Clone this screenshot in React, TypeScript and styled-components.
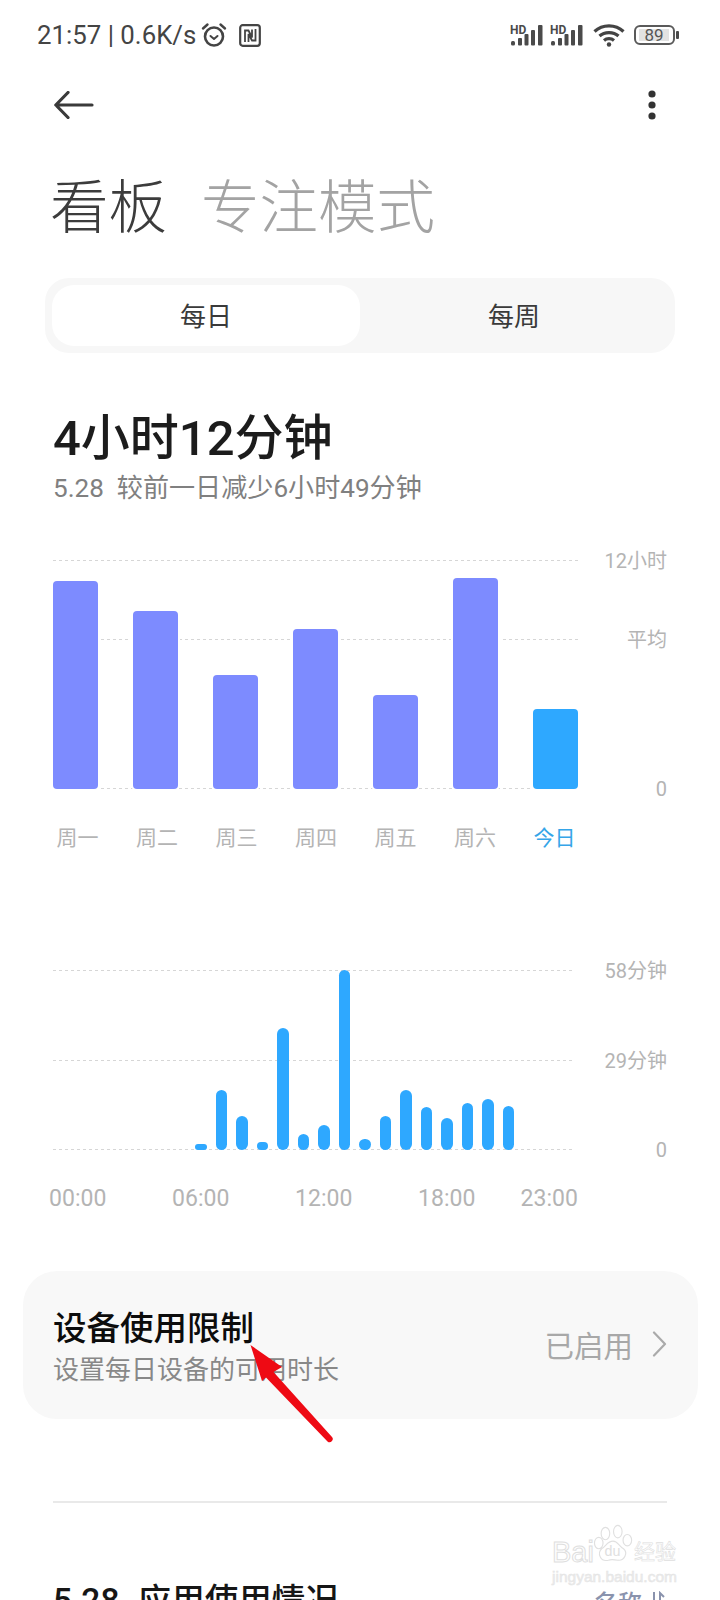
import React from "react";
import styled, { createGlobalStyle } from "styled-components";

const GlobalStyle = createGlobalStyle`
  html, body {
    margin: 0;
    padding: 0;
    background: #fff;
  }
  * {
    box-sizing: border-box;
  }
`;

const Page = styled.div`
  position: relative;
  width: 720px;
  height: 1600px;
  overflow: hidden;
  background: #fff;
  font-family: Roboto, "Noto Sans CJK SC", sans-serif;
`;

const StatusBar = styled.div`
  display: flex;
  align-items: center;
  justify-content: space-between;
  height: 70px;
  padding: 0 45px 0 37px;
`;

const StatusGroup = styled.div`
  display: flex;
  align-items: center;
`;

const StatusText = styled.span`
  font-size: 25.8px;
  line-height: 30px;
  color: #444;
  white-space: nowrap;
  margin-right: 5px;
`;

const Battery = styled.div`
  position: relative;
  display: flex;
  align-items: center;
  width: 41px;
  height: 20px;
  margin-left: 9px;
  padding-left: 3px;
  border: 2px solid #5a5a5a;
  border-radius: 6px;

  &::after {
    content: "";
    position: absolute;
    right: -6px;
    top: 4px;
    width: 3px;
    height: 8px;
    border-radius: 1px;
    background: #4a4a4a;
  }
`;

const BatteryFill = styled.div`
  width: 30px;
  height: 12px;
  display: flex;
  align-items: center;
  justify-content: center;
  background: #e2e2e2;
  color: #555;
  font-size: 17px;
  line-height: 12px;
`;

const NavBar = styled.div`
  display: flex;
  align-items: center;
  justify-content: space-between;
  height: 70px;
  padding: 0 64px 0 54px;
`;

const TitleRow = styled.div`
  display: flex;
  gap: 34px;
  margin-top: 36px;
  padding-left: 50px;
  height: 64px;
`;

const TitleTab = styled.h1<{ $active?: boolean }>`
  margin: 0;
  font-size: 58.5px;
  line-height: 64px;
  font-weight: 300;
  color: ${({ $active }) => ($active ? "#3c3c3c" : "#a3a3a3")};
`;

const Segment = styled.div`
  display: flex;
  width: 630px;
  height: 75px;
  margin: 38px 0 0 45px;
  padding: 7px;
  border-radius: 24px;
  background: #f7f7f7;
`;

const SegmentItem = styled.div<{ $active?: boolean }>`
  flex: 1;
  display: flex;
  align-items: center;
  justify-content: center;
  padding-bottom: 3px;
  border-radius: 22px;
  font-size: 26px;
  color: #3a3a3a;
  background: ${({ $active }) => ($active ? "#fff" : "transparent")};
`;

const Summary = styled.div`
  margin-top: 56px;
  padding-left: 53px;
`;

const Total = styled.div`
  font-size: 49px;
  line-height: 60px;
  font-weight: 500;
  color: #1c1c1c;
  white-space: nowrap;
`;

const Compare = styled.div`
  margin-top: 3px;
  font-size: 26.1px;
  line-height: 32px;
  color: #808080;
  white-space: nowrap;
`;

const Chart = styled.div<{ $top: number; $height: number }>`
  position: relative;
  width: 614px;
  height: ${({ $height }) => $height}px;
  margin: ${({ $top }) => $top}px 0 0 53px;
`;

const GridRow = styled.div<{ $lineWidth: number }>`
  position: absolute;
  left: 0;
  right: 0;
  height: 1px;
  display: flex;
  align-items: center;
  justify-content: space-between;

  &::before {
    content: "";
    width: ${({ $lineWidth }) => $lineWidth}px;
    height: 1px;
    background: repeating-linear-gradient(90deg, #d6d6d6 0 3px, transparent 3px 6px);
  }
`;

const TickLabel = styled.span`
  font-size: 20px;
  line-height: 24px;
  color: #b4b4b4;
  white-space: nowrap;
`;

const WeekBars = styled.div`
  position: absolute;
  inset: 0 auto 0 0;
  display: flex;
  align-items: flex-end;
  gap: 35px;
`;

const WeekBar = styled.div<{ $today?: boolean }>`
  width: 45px;
  border-radius: 4px;
  background: ${({ $today }) => ($today ? "#2ea8ff" : "#7d8bff")};
  box-shadow: 0 0 0 2px #fff;
`;

const DayRow = styled.div`
  display: flex;
  gap: 34.5px;
  margin: 35px 0 0 53px;
`;

const DayLabel = styled.span<{ $today?: boolean }>`
  width: 45px;
  display: flex;
  justify-content: center;
  font-size: 21px;
  line-height: 28px;
  white-space: nowrap;
  transform: translateX(2px);
  color: ${({ $today }) => ($today ? "#35a5e8" : "#b4b4b4")};
`;

const HourBars = styled.div`
  position: absolute;
  inset: 0 auto 0 14.5px;
  display: flex;
  align-items: flex-end;
`;

const HourSlot = styled.div`
  width: 20.5px;
  display: flex;
  justify-content: center;
`;

const HourBar = styled.div`
  width: 11.5px;
  border-radius: 6px;
  background: #2ea8ff;
`;

const HourRow = styled.div`
  display: flex;
  margin: 34px 0 0 67.5px;
`;

const HourLabel = styled.span`
  font-size: 23px;
  line-height: 30px;
  color: #b4b4b4;
  white-space: nowrap;
`;

const LimitCard = styled.div`
  display: flex;
  align-items: center;
  justify-content: space-between;
  width: 675px;
  height: 148px;
  margin: 57px 0 0 23px;
  padding: 0 31px 0 30px;
  border-radius: 34px;
  background: #f8f8f8;
`;

const LimitText = styled.div`
  margin-top: 7px;
`;

const LimitName = styled.div`
  font-size: 33.5px;
  line-height: 40px;
  font-weight: 500;
  color: #0c0c0c;
`;

const LimitHint = styled.div`
  margin-top: 3px;
  font-size: 26px;
  line-height: 36px;
  color: #888;
`;

const LimitState = styled.div`
  display: flex;
  align-items: center;
  gap: 19px;
  margin-top: -2px;
  font-size: 29.5px;
  color: #a8a8a8;
`;

const Divider = styled.div`
  width: 614px;
  height: 2px;
  margin: 82px 0 0 53px;
  background: #e9e9e9;
`;

const UsageRow = styled.div`
  display: flex;
  align-items: center;
  justify-content: space-between;
  margin-top: 78px;
  padding: 0 55px 0 53px;
  height: 40px;
`;

const UsageTitle = styled.div`
  font-size: 33.5px;
  line-height: 40px;
  font-weight: 500;
  word-spacing: 10px;
  color: #161616;
  white-space: nowrap;
`;

const SortButton = styled.div`
  display: flex;
  align-items: center;
  gap: 7px;
  font-size: 24px;
  font-weight: 500;
  color: #8a93ad;
`;

const Watermark = styled.div`
  position: absolute;
  left: 552px;
  top: 1522px;
  width: 132px;
  color: #fff;
`;

const MarkTop = styled.div`
  display: flex;
  align-items: flex-end;
  height: 42px;
`;

const MarkWord = styled.span<{ $size: number; $stroke: number }>`
  font-family: "Liberation Sans", "Noto Sans CJK SC", sans-serif;
  font-size: ${({ $size }) => $size}px;
  line-height: 24px;
  color: #fff;
  -webkit-text-stroke: ${({ $stroke }) => $stroke}px #dedede;
  white-space: nowrap;
`;

const MarkUrl = styled.div`
  margin-top: 5px;
  font-family: "Liberation Sans", sans-serif;
  font-size: 15.5px;
  line-height: 16px;
  color: #ececec;
  -webkit-text-stroke: 0.5px #e4e4e4;
  white-space: nowrap;
`;

const Pointer = styled.svg`
  position: absolute;
  left: 240px;
  top: 1335px;
`;

const SignalIcon: React.FC = () => (
  <svg width="34" height="22" viewBox="0 0 34 22" style={{ marginRight: 6 }}>
    <text x="0" y="9.5" fontSize="12" fontWeight="700" fontFamily="Roboto, sans-serif" fill="#4a4a4a">
      HD
    </text>
    <g fill="#4a4a4a">
      <rect x="1" y="17" width="4" height="4.5" rx="1.5" />
      <rect x="8" y="14" width="4" height="7.5" rx="1" />
      <rect x="14.5" y="10" width="4" height="11.5" rx="1" />
      <rect x="21" y="6" width="4" height="15.5" rx="1" />
      <rect x="28" y="1" width="4.5" height="20.5" rx="1" />
    </g>
  </svg>
);

const days = [
  { label: "周一", height: 208 },
  { label: "周二", height: 178 },
  { label: "周三", height: 114 },
  { label: "周四", height: 160 },
  { label: "周五", height: 94 },
  { label: "周六", height: 211 },
  { label: "今日", height: 80, today: true },
];

const hours = [0, 0, 0, 0, 0, 0, 6, 60, 34, 8, 122, 16, 25, 180, 11, 34, 60, 43, 32, 47, 51, 44, 0, 0];
const hourLabels: Record<number, string> = { 0: "00:00", 6: "06:00", 12: "12:00", 18: "18:00", 23: "23:00" };

const App: React.FC = () => {
  return (
    <Page>
      <GlobalStyle />
      <StatusBar>
        <StatusGroup>
          <StatusText>21:57 | 0.6K/s</StatusText>
          <svg width="26" height="26" viewBox="0 0 26 26" fill="none" stroke="#444" strokeLinecap="round" strokeLinejoin="round">
            <circle cx="13" cy="14.5" r="9" strokeWidth="2.6" />
            <path d="M9.5 14l3.5 3 3.5-3" strokeWidth="2" />
            <path d="M2 6.5 6.5 2.5M24 6.5l-4.5-4" strokeWidth="2.4" />
          </svg>
          <svg width="22" height="23" viewBox="0 0 22 23" fill="none" stroke="#444" style={{ marginLeft: 12 }}>
            <rect x="1.2" y="1.2" width="19.6" height="20.6" rx="2.5" strokeWidth="2.2" />
            <path d="M6 18V6.5h3.5l3.5 7V5.5M16.5 5v11.5H13L9.5 10v8" strokeWidth="1.8" />
          </svg>
        </StatusGroup>
        <StatusGroup>
          <SignalIcon />
          <SignalIcon />
          <svg width="32" height="24" viewBox="0 0 32 24" fill="none" stroke="#444" strokeWidth="3.2" style={{ marginLeft: 3 }}>
            <path d="M1.5 8.5C9.5 1 22.5 1 30.5 8.5" />
            <path d="M6.5 13c5-4.6 14-4.6 19 0" />
            <path d="M11 17.5c2.8-2.4 7.2-2.4 10 0" />
            <circle cx="16" cy="21.5" r="2.2" fill="#444" stroke="none" />
          </svg>
          <Battery>
            <BatteryFill>89</BatteryFill>
          </Battery>
        </StatusGroup>
      </StatusBar>

      <NavBar>
        <svg width="40" height="28" viewBox="0 0 40 28" fill="none" stroke="#3a3a3a" strokeWidth="3.2" strokeLinecap="round" strokeLinejoin="round">
          <path d="M38 14H2M14 1.5 1.8 14 14 26.5" />
        </svg>
        <svg width="8" height="30" viewBox="0 0 8 30" fill="#333">
          <circle cx="4" cy="4" r="3.6" />
          <circle cx="4" cy="15" r="3.6" />
          <circle cx="4" cy="26" r="3.6" />
        </svg>
      </NavBar>

      <TitleRow>
        <TitleTab $active>看板</TitleTab>
        <TitleTab>专注模式</TitleTab>
      </TitleRow>

      <Segment>
        <SegmentItem $active>每日</SegmentItem>
        <SegmentItem>每周</SegmentItem>
      </Segment>

      <Summary>
        <Total>4小时12分钟</Total>
        <Compare>5.28&nbsp; 较前一日减少6小时49分钟</Compare>
      </Summary>

      <Chart $top={56} $height={229}>
        <GridRow $lineWidth={527} style={{ top: 0 }}>
          <TickLabel>12小时</TickLabel>
        </GridRow>
        <GridRow $lineWidth={527} style={{ top: 79 }}>
          <TickLabel>平均</TickLabel>
        </GridRow>
        <GridRow $lineWidth={527} style={{ top: 228 }}>
          <TickLabel>0</TickLabel>
        </GridRow>
        <WeekBars>
          {days.map((day) => (
            <WeekBar key={day.label} $today={day.today} style={{ height: day.height }} />
          ))}
        </WeekBars>
      </Chart>
      <DayRow>
        {days.map((day) => (
          <DayLabel key={day.label} $today={day.today}>
            {day.label}
          </DayLabel>
        ))}
      </DayRow>

      <Chart $top={118} $height={180}>
        <GridRow $lineWidth={520} style={{ top: 0 }}>
          <TickLabel>58分钟</TickLabel>
        </GridRow>
        <GridRow $lineWidth={520} style={{ top: 90 }}>
          <TickLabel>29分钟</TickLabel>
        </GridRow>
        <GridRow $lineWidth={520} style={{ top: 179 }}>
          <TickLabel>0</TickLabel>
        </GridRow>
        <HourBars>
          {hours.map((value, hour) => (
            <HourSlot key={hour}>{value > 0 && <HourBar style={{ height: value }} />}</HourSlot>
          ))}
        </HourBars>
      </Chart>
      <HourRow>
        {hours.map((_, hour) => (
          <HourSlot key={hour}>{hourLabels[hour] && <HourLabel>{hourLabels[hour]}</HourLabel>}</HourSlot>
        ))}
      </HourRow>

      <LimitCard>
        <LimitText>
          <LimitName>设备使用限制</LimitName>
          <LimitHint>设置每日设备的可用时长</LimitHint>
        </LimitText>
        <LimitState>
          已启用
          <svg width="15" height="26" viewBox="0 0 15 26" fill="none" stroke="#aaa" strokeWidth="2.2" strokeLinecap="round" strokeLinejoin="round">
            <path d="M2 1.5 13 13 2 24.5" />
          </svg>
        </LimitState>
      </LimitCard>

      <Divider />

      <UsageRow>
        <UsageTitle>5.28 应用使用情况</UsageTitle>
        <SortButton>
          名称
          <svg width="16" height="20" viewBox="0 0 16 20" fill="none" stroke="#8a93ad" strokeWidth="2">
            <path d="M5 1v17L1 14M11 19V2l4 4" />
          </svg>
        </SortButton>
      </UsageRow>

      <Watermark>
        <MarkTop>
          <MarkWord $size={29} $stroke={1}>Bai</MarkWord>
          <svg width="40" height="40" viewBox="0 0 42 40" fill="none" stroke="#e0e0e0" strokeWidth="1.2">
            <ellipse cx="12" cy="9" rx="4.5" ry="6.5" />
            <ellipse cx="25" cy="7" rx="4.5" ry="6.5" />
            <ellipse cx="35" cy="16" rx="4.5" ry="6" />
            <ellipse cx="5" cy="19" rx="4.5" ry="6" />
            <path d="M20 17c5 0 6 5 11 8 5 4 1 13-6 12-3-.5-7-1-10 0-8 2-12-7-7-12 5-3 6-8 12-8z" />
            <text x="11" y="33" fontSize="15" fontFamily="Liberation Sans, sans-serif" fill="#e0e0e0" stroke="none">
              du
            </text>
          </svg>
          <MarkWord $size={21} $stroke={0.6}>经验</MarkWord>
        </MarkTop>
        <MarkUrl>jingyan.baidu.com</MarkUrl>
      </Watermark>

      <Pointer width="100" height="115" viewBox="0 0 100 115" fill="#ee0a14">
        <path d="M10.5 10 42 32 33.5 37 92 102a3.2 3.2 0 0 1-4.5 4.5L26 42.5 22 46z" />
      </Pointer>
    </Page>
  );
};

export default App;
